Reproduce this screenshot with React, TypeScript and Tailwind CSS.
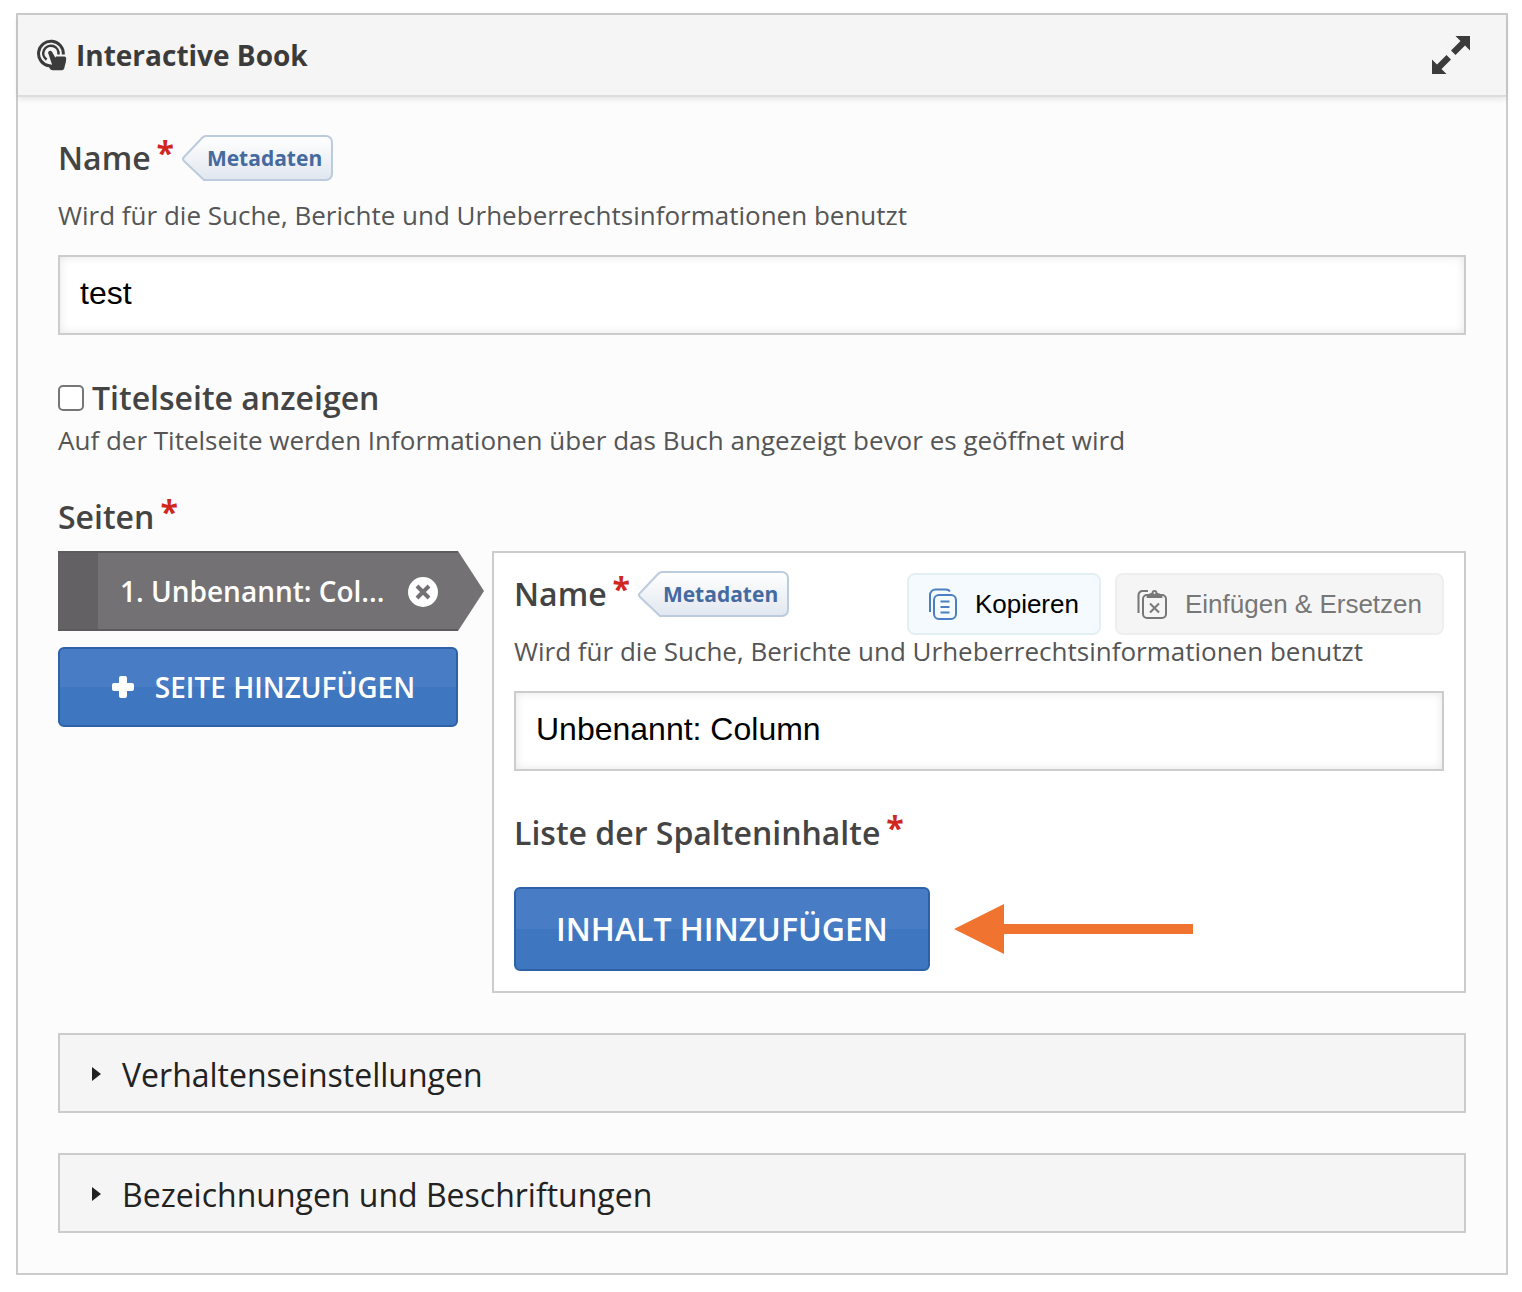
import { useState } from "react";
import type { ReactNode } from "react";

function TouchIcon() {
  return (
    <svg viewBox="0 0 30 34" className="h-[34px] w-[30px]" fill="none" aria-hidden="true">
      <g stroke="#3b3b3b">
        <path d="M12 27.800A12.400 12.400 0 1 1 26.300 16.500" strokeWidth="3" />
        <path d="M9.600 21.600A7.600 7.600 0 1 1 21.400 16.500" strokeWidth="2.600" />
      </g>
      <path
        fill="#3b3b3b"
        d="M11.400 13.800c.9-1.300 2.700-1.300 3.600 0l3.400 6 .6-1.300h8.300c1.200 0 1.900.8 1.900 2 0 3.500-1.200 6-1.700 8.800-.3 1.600-1 2.900-2.500 2.900h-9.300c-1.400 0-2.200-.8-2.900-1.700l-1.500-2.300c-.7-1.200.2-2.200 1.400-2l2.400.5-3.600-10.600c-.4-.9-.5-1.600-.1-2.300z"
      />
    </svg>
  );
}

function ExpandIcon() {
  return (
    <svg viewBox="0 0 38 38" className="size-[38px]" fill="#3b3b3b" aria-hidden="true">
      <path d="M38 0v14.500l-5-5L23.500 19 19 14.500 28.500 5l-5-5z" />
      <path d="M0 38V23.500l5 5 9.500-9.500 4.500 4.500L9.500 33l5 5z" />
    </svg>
  );
}

function CopyIcon() {
  return (
    <svg viewBox="0 0 28 32" className="h-8 w-7" fill="none" stroke="#4a80c0" strokeWidth="2" aria-hidden="true">
      <path d="M1 24V7a5.500 5.500 0 0 1 5.500-5.500H17a5 5 0 0 1 4 2" />
      <rect x="5" y="7" width="22" height="24" rx="5" />
      <path d="M11.500 13.500h9M11.500 19h9M11.500 24.500h9" />
    </svg>
  );
}

function PasteIcon() {
  return (
    <svg viewBox="0 0 30 32" className="h-8 w-[30px]" fill="none" stroke="#777" strokeWidth="2" aria-hidden="true">
      <path d="M1.500 25V7a4 4 0 0 1 4-4H11" />
      <rect x="6" y="7" width="23" height="23" rx="4" />
      <path d="M13 15.500l9 9M22 15.500l-9 9" />
      <path fill="#777" stroke="none" d="M9.500 10c0-3 2-4.500 5-5 0-2 1.300-3 3-3s3 1 3 3c3 .5 5 2 5 5z" />
      <circle cx="17.500" cy="5" r="1" fill="#f5f5f5" stroke="none" />
    </svg>
  );
}

function Label({ children, htmlFor, required }: { children: ReactNode; htmlFor?: string; required?: boolean }) {
  return (
    <label htmlFor={htmlFor} className="flex items-start text-[32px] leading-[46px] font-semibold text-[#444]">
      {children}
      {required && <span className="ml-1.5 leading-9 font-bold text-[#d0271d]">*</span>}
    </label>
  );
}

function MetadataButton() {
  return (
    <button type="button" className="relative h-[46px] w-[151px]">
      <svg viewBox="0 0 151 46" className="absolute inset-0 size-full" aria-hidden="true">
        <defs>
          <linearGradient id="tag" x1="0" y1="0" x2="0" y2="1">
            <stop offset="0" stopColor="#fff" />
            <stop offset="1" stopColor="#e1e7ef" />
          </linearGradient>
        </defs>
        <path
          d="M24 1H144a6 6 0 0 1 6 6V39a6 6 0 0 1-6 6H22L2 26q-2-2 0-4L20 3q2-2 4-2z"
          fill="url(#tag)"
          stroke="#bccbdd"
          strokeWidth="2"
        />
      </svg>
      <span className="relative ml-[14px] text-[21px] leading-[46px] font-bold text-[#456a9f]">Metadaten</span>
    </button>
  );
}

function Description({ children }: { children: ReactNode }) {
  return <p className="text-[26px] leading-9 text-[#555]">{children}</p>;
}

function TextField({ id, value }: { id: string; value: string }) {
  return (
    <input
      id={id}
      type="text"
      defaultValue={value}
      className="h-20 w-full border-2 border-[#ccc] bg-white px-5 pb-1 font-['Liberation_Sans',sans-serif] text-[32px] text-black shadow-[inset_0_0_10px_rgba(0,0,0,0.1)] outline-none"
    />
  );
}

function NameField({ id, value }: { id: string; value: string }) {
  return (
    <div>
      <div className="flex items-center gap-2">
        <Label htmlFor={id} required>
          Name
        </Label>
        <MetadataButton />
      </div>
      <div className="mt-4 mb-[22px]">
        <Description>Wird für die Suche, Berichte und Urheberrechtsinformationen benutzt</Description>
      </div>
      <TextField id={id} value={value} />
    </div>
  );
}

function Group({ title }: { title: string }) {
  const [open, setOpen] = useState(false);
  return (
    <button
      type="button"
      aria-expanded={open}
      onClick={() => setOpen(!open)}
      className="flex h-20 w-full items-center gap-5 border-2 border-[#ccc] bg-[#f5f5f5] px-8 pt-1 text-[32px] leading-10 text-[#222]"
    >
      <svg viewBox="0 0 10 16" className="h-4 w-[10px]" fill="#222" aria-hidden="true">
        <path d="M0 0l9 7-9 7z" />
      </svg>
      <span>{title}</span>
    </button>
  );
}

const blueButton =
  "rounded-md border-2 border-[#2d62a8] bg-linear-to-b from-[#487dc5] from-50% to-[#3e76c0] to-50% font-semibold text-white uppercase";

export default function App() {
  return (
    <div className="bg-white pt-[13px] pr-[14px] pb-4 pl-4 font-['Open_Sans',sans-serif]">
      <main className="border-2 border-[#ccc] bg-[#fcfcfc]">
        <header className="flex h-[82px] items-center justify-between border-b-2 border-[#ddd] bg-[#f5f5f5] pr-9 pl-[19px] shadow-[0_2px_6px_rgba(0,0,0,0.1)]">
          <h1 className="flex items-center gap-[9px] text-[28px] leading-10 font-bold text-[#3b3b3b]">
            <TouchIcon />
            Interactive Book
          </h1>
          <button type="button" aria-label="Vollbild">
            <ExpandIcon />
          </button>
        </header>

        <div className="px-10 pt-[38px] pb-10">
          <NameField id="book-name" value="test" />

          <div className="mt-10">
            <div className="flex items-center gap-2">
              <input
                id="cover"
                type="checkbox"
                className="size-[26px] appearance-none rounded-[5px] border-2 border-[#767676] bg-white checked:bg-[#3e76c0]"
              />
              <Label htmlFor="cover">Titelseite anzeigen</Label>
            </div>
            <div className="mt-px">
              <Description>Auf der Titelseite werden Informationen über das Buch angezeigt bevor es geöffnet wird</Description>
            </div>
          </div>

          <div className="mt-9">
            <Label required>Seiten</Label>
          </div>

          <div className="mt-[11px] flex gap-[34px]">
            <div className="flex w-[400px] shrink-0 flex-col gap-4">
              <div className="relative flex h-20 items-center border-y-2 border-[#5d5b5e] bg-[#737173] text-[28px] font-semibold text-white">
                <span className="h-full w-10 bg-[#636164]" />
                <span className="ml-[22px] grow">1. Unbenannt: Col...</span>
                <button type="button" aria-label="Seite entfernen" className="mt-0.5 mr-5">
                  <svg viewBox="0 0 30 30" className="size-[30px]" aria-hidden="true">
                    <circle cx="15" cy="15" r="15" fill="#fff" />
                    <path d="M9 9l12 12M21 9L9 21" stroke="#737173" strokeWidth="4" />
                  </svg>
                </button>
                <svg viewBox="0 0 26 80" className="absolute -top-0.5 left-full h-20 w-[26px]" aria-hidden="true">
                  <path d="M0 0l26 40L0 80z" fill="#737173" />
                </svg>
              </div>
              <button
                type="button"
                className={`${blueButton} flex h-20 items-center justify-center gap-5 pl-[10px] text-[28px]`}
              >
                <svg viewBox="0 0 24 24" className="size-6" fill="#fff" aria-hidden="true">
                  <path d="M10 1h4a2 2 0 0 1 2 2v5h5a2 2 0 0 1 2 2v4a2 2 0 0 1-2 2h-5v5a2 2 0 0 1-2 2h-4a2 2 0 0 1-2-2v-5H3a2 2 0 0 1-2-2v-4a2 2 0 0 1 2-2h5V3a2 2 0 0 1 2-2z" />
                </svg>
                Seite hinzufügen
              </button>
            </div>

            <section className="relative min-w-0 grow border-2 border-[#ccc] bg-white px-5 pt-[18px] pb-5">
              <div className="absolute top-5 right-5 flex gap-[14px] font-['Liberation_Sans',sans-serif] text-[26px] leading-8">
                <button
                  type="button"
                  className="flex h-[62px] items-center gap-[18px] rounded-lg border-2 border-[#e3f0f3] bg-[#f5faff] px-5 text-black"
                >
                  <CopyIcon />
                  Kopieren
                </button>
                <button
                  type="button"
                  disabled
                  className="flex h-[62px] items-center gap-[18px] rounded-lg border-2 border-[#eee] bg-[#f5f5f5] px-5 text-[#777]"
                >
                  <PasteIcon />
                  Einfügen &amp; Ersetzen
                </button>
              </div>
              <NameField id="page-name" value="Unbenannt: Column" />
              <div className="mt-[39px]">
                <Label required>Liste der Spalteninhalte</Label>
              </div>
              <div className="mt-[31px] flex items-center gap-6">
                <button type="button" className={`${blueButton} h-[84px] px-10 text-[32px]`}>
                  Inhalt hinzufügen
                </button>
                <svg viewBox="0 0 240 50" className="h-[50px] w-60" fill="#f07430" aria-hidden="true">
                  <path d="M0 25L50 0v20h189v10H50v20z" />
                </svg>
              </div>
            </section>
          </div>

          <div className="mt-10 flex flex-col gap-10">
            <Group title="Verhaltenseinstellungen" />
            <Group title="Bezeichnungen und Beschriftungen" />
          </div>
        </div>
      </main>
    </div>
  );
}
